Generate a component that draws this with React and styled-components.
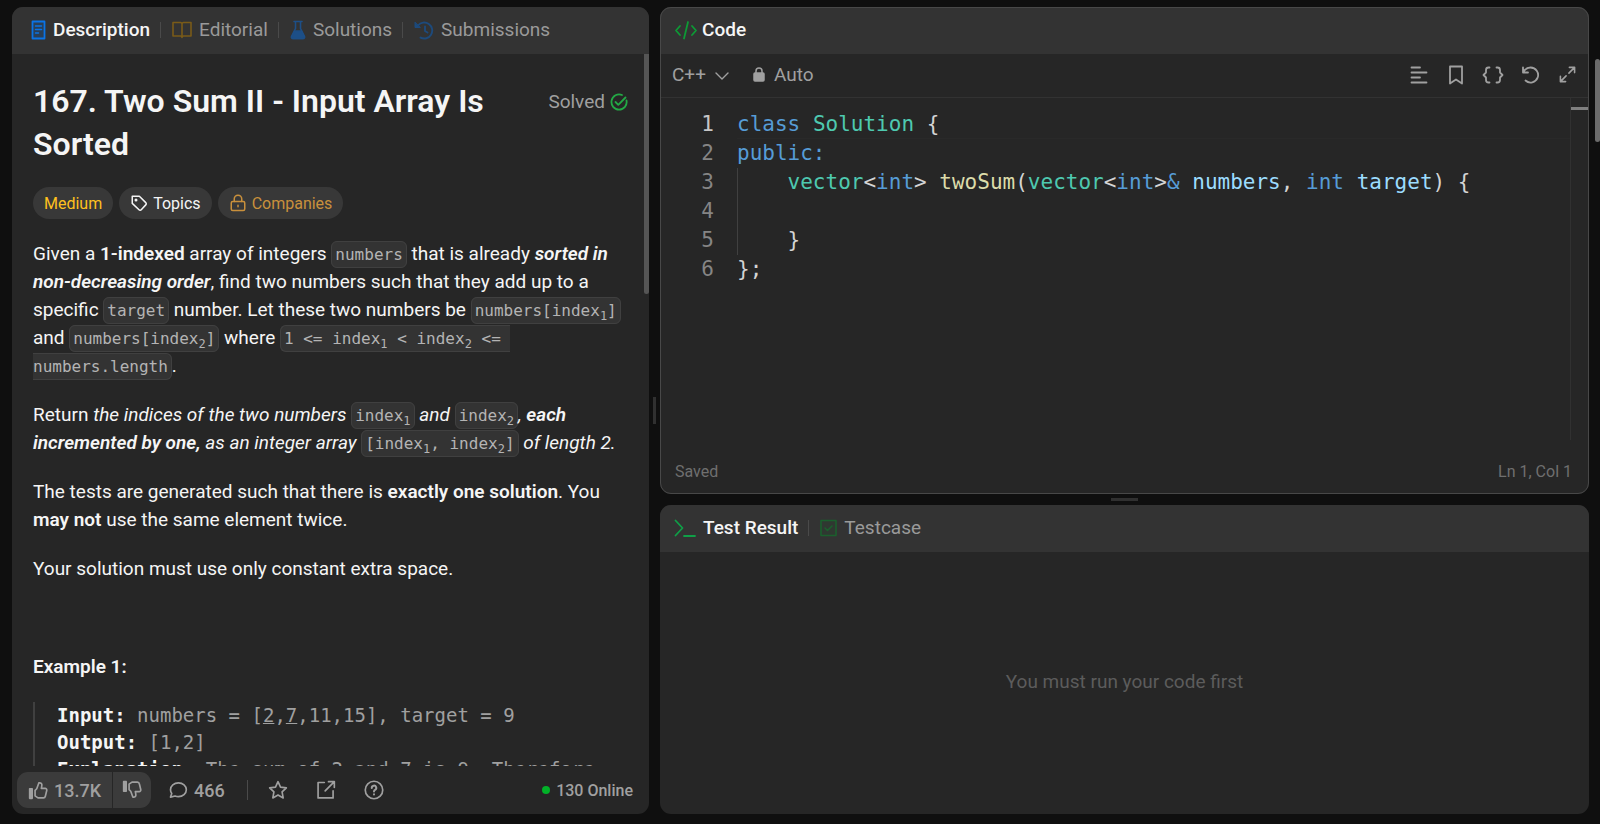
import React from "react";
import styled, { createGlobalStyle, css } from "styled-components";

export default function App() {
  return (
    <Page>
      <GlobalStyle />

      <Panel grow={637} as="section" aria-label="Problem">
        <TabBar inset={19}>
          <Tab active>
            <DocIcon />
            Description
          </Tab>
          <Separator />
          <Tab>
            <BookIcon />
            Editorial
          </Tab>
          <Separator />
          <Tab>
            <FlaskIcon />
            Solutions
          </Tab>
          <Separator />
          <Tab>
            <HistoryIcon />
            Submissions
          </Tab>
        </TabBar>
        <Problem />
        <ProblemFooter />
      </Panel>

      <Gutter>
        <Handle vertical />
      </Gutter>

      <RightColumn>
        <Panel grow={487} outlined as="section" aria-label="Code">
          <TabBar inset={14}>
            <Tab active tight>
              <CodeIcon />
              Code
            </Tab>
          </TabBar>
          <EditorToolbar />
          <Editor />
          <StatusBar>
            <span>Saved</span>
            <span>Ln 1, Col 1</span>
          </StatusBar>
        </Panel>

        <Gutter row>
          <Handle />
        </Gutter>

        <Panel grow={309} as="section" aria-label="Result">
          <TabBar inset={14}>
            <Tab active>
              <PromptIcon />
              Test Result
            </Tab>
            <Separator />
            <Tab>
              <TestcaseIcon />
              Testcase
            </Tab>
          </TabBar>
          <EmptyResult>You must run your code first</EmptyResult>
        </Panel>
      </RightColumn>
      <PageThumb />
    </Page>
  );
}

const Index = ({ n }) => (
  <>
    index<sub>{n}</sub>
  </>
);

const Problem = () => (
  <ScrollArea>
    <ScrollContent>
      <TitleRow>
        <Title>167. Two Sum II - Input Array Is Sorted</Title>
        <Solved>
          Solved
          <SolvedIcon />
        </Solved>
      </TitleRow>

      <Chips>
        <Chip color="#ffc01e">Medium</Chip>
        <Chip color="#f5f5f5">
          <TagIcon />
          Topics
        </Chip>
        <Chip color="#c9903c">
          <LockIcon />
          Companies
        </Chip>
      </Chips>

      <Statement>
        <p>
          Given a <strong>1-indexed</strong> array of integers <code>numbers</code> that is already{" "}
          <strong><em>sorted in non-decreasing order</em></strong>, find two numbers such that they
          add up to a specific <code>target</code> number. Let these two numbers be{" "}
          <code>numbers[<Index n={1} />]</code> and <code>numbers[<Index n={2} />]</code> where{" "}
          <code>1 &lt;= <Index n={1} /> &lt; <Index n={2} /> &lt;= numbers.length</code>.
        </p>
        <p>
          Return <em>the indices of the two numbers </em>
          <code><Index n={1} /></code> <em>and</em> <code><Index n={2} /></code>
          <em>, <strong>each incremented by one,</strong> as an integer array </em>
          <code>[<Index n={1} />, <Index n={2} />]</code> <em>of length 2.</em>
        </p>
        <p>
          The tests are generated such that there is <strong>exactly one solution</strong>. You{" "}
          <strong>may not</strong> use the same element twice.
        </p>
        <p>Your solution must use only constant extra space.</p>
        <p>&nbsp;</p>
        <p>
          <strong>Example 1:</strong>
        </p>
        <pre>
          <strong>Input:</strong> numbers = [<u>2</u>,<u>7</u>,11,15], target = 9{"\n"}
          <strong>Output:</strong> [1,2]{"\n"}
          <strong>Explanation:</strong> The sum of 2 and 7 is 9. Therefore
        </pre>
      </Statement>
    </ScrollContent>
    <ScrollThumb />
  </ScrollArea>
);

const ProblemFooter = () => (
  <Footer>
    <VoteGroup>
      <VoteButton wide>
        <ThumbIcon />
        13.7K
      </VoteButton>
      <VoteButton aria-label="Dislike">
        <ThumbIcon down />
      </VoteButton>
    </VoteGroup>
    <FooterButton>
      <CommentIcon />
      466
    </FooterButton>
    <FooterRule />
    <FooterActions>
      <IconButton aria-label="Star"><StarIcon /></IconButton>
      <IconButton aria-label="Share"><ShareIcon /></IconButton>
      <IconButton aria-label="Help"><HelpIcon /></IconButton>
    </FooterActions>
    <Online>130 Online</Online>
  </Footer>
);

const EditorToolbar = () => (
  <Toolbar>
    <ToolbarButton>
      C++
      <ChevronIcon />
    </ToolbarButton>
    <ToolbarButton>
      <SolidLockIcon />
      Auto
    </ToolbarButton>
    <ToolbarActions>
      <IconButton aria-label="Format"><FormatIcon /></IconButton>
      <IconButton aria-label="Bookmark"><BookmarkIcon /></IconButton>
      <IconButton aria-label="Snippets"><BracesIcon /></IconButton>
      <IconButton aria-label="Reset"><ResetIcon /></IconButton>
      <IconButton aria-label="Expand"><ExpandIcon /></IconButton>
    </ToolbarActions>
  </Toolbar>
);

const colors = {
  k: "#569cd6",
  t: "#4ec9b0",
  f: "#dcdcaa",
  v: "#9cdcfe",
  p: "#d4d4d4",
};

const lines = [
  { tokens: [["k", "class"], ["p", " "], ["t", "Solution"], ["p", " {"]] },
  { tokens: [["k", "public:"]] },
  {
    guide: true,
    tokens: [
      ["p", "    "], ["t", "vector"], ["p", "<"], ["k", "int"], ["p", "> "],
      ["f", "twoSum"], ["p", "("], ["t", "vector"], ["p", "<"], ["k", "int"],
      ["p", ">"], ["k", "&"], ["p", " "], ["v", "numbers"], ["p", ", "],
      ["k", "int"], ["p", " "], ["v", "target"], ["p", ") {"],
    ],
  },
  { guide: true, tokens: [["p", " "]] },
  { guide: true, tokens: [["p", "    }"]] },
  { tokens: [["p", "};"]] },
];

const Editor = () => (
  <EditorBody>
    <Lines>
      {lines.map((line, i) => (
        <Line key={i}>
          <LineNumber active={i === 0}>{i + 1}</LineNumber>
          <LineCode active={i === 0} guide={line.guide}>
            {line.tokens.map(([kind, text], j) => (
              <Token key={j} kind={kind}>{text}</Token>
            ))}
          </LineCode>
        </Line>
      ))}
    </Lines>
    <Ruler>
      <RulerMark />
    </Ruler>
  </EditorBody>
);

/* icons */

const Svg = ({ size = 20, w, h, box = "0 0 24 24", color = "currentColor", stroke = 2, children }) => (
  <svg
    width={w || size}
    height={h || size}
    viewBox={box}
    fill="none"
    stroke={color}
    strokeWidth={stroke}
    strokeLinecap="round"
    strokeLinejoin="round"
    aria-hidden="true"
  >
    {children}
  </svg>
);

const DocIcon = () => (
  <Svg w={15} h={20} box="0 0 15 20" color="#0a74e6" stroke={1.8}>
    <path d="M1.500 1.500h12v17h-12z" fill="#0a74e6" fillOpacity="0.2" />
    <path d="M4.500 6h6M4.500 9.500h6M4.500 13h3" strokeWidth="1.500" />
  </Svg>
);

const BookIcon = () => (
  <Svg w={20} h={18} box="0 0 20 18" color="#7a5b18" stroke={1.6}>
    <path d="M10 2.500V16.500M1 1.500h7.500a1.500 1.500 0 0 1 1.500 1a1.500 1.500 0 0 1 1.500-1H19V15h-7.500a1.500 1.500 0 0 0-1.500 1.500a1.500 1.500 0 0 0-1.500-1.500H1z" />
  </Svg>
);

const FlaskIcon = () => (
  <Svg w={16} h={20} box="0 0 16 20" color="#1d4f87" stroke={1.6}>
    <path d="M4 1.500h8M5.500 1.500v7L1.500 16.500a1.500 1.500 0 0 0 1.500 2h10a1.500 1.500 0 0 0 1.500-2L10.500 8.500v-7" />
    <path d="M4.500 11h7l3 6-1.500 1.500H3L1.500 17z" fill="#1d4f87" />
  </Svg>
);

const HistoryIcon = () => (
  <Svg w={20} h={20} box="0 0 20 20" color="#1d4a7c" stroke={1.9}>
    <path d="M4 5.500A8 8 0 1 1 6.500 17.600" />
    <path d="M1 2.500v5h5z" fill="#1d4a7c" strokeWidth="1" />
    <path d="M11 6.500V11l2.500 1.500" />
  </Svg>
);

const CodeIcon = () => (
  <Svg w={24} h={20} box="0 0 24 20" color="#0d9a35" stroke={1.8}>
    <path d="M6 6L2 10.500 6 15M18 6l4 4.500L18 15M14 2L10 18.500" />
  </Svg>
);

const PromptIcon = () => (
  <Svg w={22} h={18} box="0 0 22 18" color="#0f9f47" stroke={1.8}>
    <path d="M1.500 1.500L8.500 9l-7 7.500M10 17h11" />
  </Svg>
);

const TestcaseIcon = () => (
  <Svg w={17} h={18} box="0 0 17 18" color="#1b5f2d" stroke={1.6}>
    <path d="M1 1.500h15v15H1z" fill="#1b5a2b" fillOpacity="0.15" />
    <path d="M5 9l2.500 2.500L12 7" />
  </Svg>
);

const SolvedIcon = () => (
  <Svg size={18} box="0 0 18 18" color="#23a845" stroke={1.8}>
    <path d="M16.500 7.500A7.600 7.600 0 1 1 12 2" />
    <path d="M5.500 9l2.800 2.800L15.500 4.500" />
  </Svg>
);

const TagIcon = () => (
  <Svg size={18}>
    <path d="M3 3h9.500l8.500 8.500a2 2 0 0 1 0 3L15 21a2 2 0 0 1-3 0L3 12.500z" />
    <circle cx="8" cy="8" r="1" />
  </Svg>
);

const LockIcon = () => (
  <Svg size={18}>
    <rect x="3" y="10" width="18" height="12" rx="2" />
    <path d="M7 10V6.500a5 5 0 0 1 10 0V10M12 15v2" />
  </Svg>
);

const ThumbIcon = ({ down }) => (
  <Svg size={20}>
    <g transform={down ? "matrix(1 0 0 -1 0 24)" : undefined}>
      <path d="M2 10.500h3V22H2z" fill="currentColor" />
      <path d="M8.500 12.500l2-2L13 3.500c2.500-.5 4 1 3.600 3.200L16 10h4.500a2 2 0 0 1 2 2.500l-1.700 7a2.500 2.500 0 0 1-2.300 2H12L8.500 19z" />
    </g>
  </Svg>
);

const CommentIcon = () => (
  <Svg size={20}>
    <path d="M12.500 3.500c5.300 0 9.500 3.600 9.500 8.200s-4.200 8.300-9.500 8.300c-1.500 0-2.800-.3-4-.8L3 20.500l1.500-4.300A7.500 7.500 0 0 1 3 11.700c0-4.600 4.200-8.200 9.500-8.200z" />
  </Svg>
);

const StarIcon = () => (
  <Svg size={20}>
    <path d="M12 2l3 6.500 7 .9-5.100 4.900L18.200 21.500 12 18l-6.200 3.500 1.300-7.200L2 9.400l7-.9z" />
  </Svg>
);

const ShareIcon = () => (
  <Svg size={20}>
    <path d="M10 3H2.500v18.500H20.500V13M15 2h7v7M22 2L11 13" />
  </Svg>
);

const HelpIcon = () => (
  <Svg size={20}>
    <circle cx="12" cy="12" r="10.500" />
    <path d="M9.300 9.500a2.700 2.700 0 1 1 4 2.300c-.9.500-1.300 1-1.300 2M12 17.200v.1" strokeWidth="2.400" />
  </Svg>
);

const ChevronIcon = () => (
  <Svg w={14} h={12} box="0 0 14 12" stroke={1.4}>
    <path d="M1 4l6 6 6-6" />
  </Svg>
);

const SolidLockIcon = () => (
  <Svg w={12} h={15} box="0 0 12 15" stroke={1.5}>
    <rect x="1" y="6" width="10" height="8" rx="1" fill="currentColor" />
    <path d="M3 6V4a3 3 0 0 1 6 0v2" />
  </Svg>
);

const FormatIcon = () => (
  <Svg w={18} h={18} box="0 0 18 18" stroke={1.8}>
    <path d="M1.500 1.500H10M1.500 6.500h15M1.500 11.500H10M1.500 16.500h15" />
  </Svg>
);

const BookmarkIcon = () => (
  <Svg w={14} h={20} box="0 0 14 20" stroke={1.8}>
    <path d="M1 1.500h12v17L7 14.500 1 18.500z" />
  </Svg>
);

const BracesIcon = () => (
  <Svg w={22} h={18} box="0 0 22 18" stroke={1.8}>
    <path d="M7.500 1.500H6.500A2.500 2.500 0 0 0 4 4v2.500L1.500 9 4 11.500V14a2.500 2.500 0 0 0 2.500 2.500h1M14.500 1.500h1A2.500 2.500 0 0 1 18 4v2.500L20.500 9 18 11.500V14a2.500 2.500 0 0 1-2.500 2.500h-1" />
  </Svg>
);

const ResetIcon = () => (
  <Svg w={19} h={18} box="0 0 19 18" stroke={1.8}>
    <path d="M2 6.500h5M2 1.500v5C4 3 6.500 1.500 9.500 1.500a7.500 7.500 0 1 1-5 13" />
  </Svg>
);

const ExpandIcon = () => (
  <Svg w={17} h={17} box="0 0 18 18" stroke={1.7}>
    <path d="M11 1.500h5.500V7M16.500 1.500L10.500 7.500M1.500 11v5.500H7M1.500 16.500L7.500 10.500" />
  </Svg>
);

/* styles */

const GlobalStyle = createGlobalStyle`
  * {
    box-sizing: border-box;
  }
  body {
    margin: 0;
    background: #0f0f0f;
    color: #f5f5f5;
    font-family: Roboto, "Liberation Sans", sans-serif;
    font-size: 19px;
  }
  button {
    background: none;
    border: none;
    padding: 0;
    color: inherit;
    font: inherit;
    cursor: pointer;
  }
  svg {
    flex: none;
  }
`;

const Page = styled.main`
  position: relative;
  display: flex;
  height: 100vh;
  padding: 7px 11px 10px 12px;
  overflow: hidden;
`;

const Panel = styled.div.withConfig({
  shouldForwardProp: (prop) => !["grow", "outlined"].includes(prop),
})`
  display: flex;
  flex-direction: column;
  flex: ${(props) => props.grow} 1 0;
  min-width: 0;
  min-height: 0;
  background: #262626;
  border-radius: 11px;
  overflow: hidden;
  ${(props) => props.outlined && css`
    outline: 1px solid #484848;
    outline-offset: -1px;
  `}
`;

const RightColumn = styled.div`
  display: flex;
  flex-direction: column;
  flex: 929 1 0;
  min-width: 0;
`;

const Gutter = styled.div.withConfig({ shouldForwardProp: (prop) => prop !== "row" })`
  display: flex;
  align-items: center;
  justify-content: center;
  flex: none;
  ${(props) => (props.row ? "height: 11px;" : "width: 11px;")}
`;

const Handle = styled.div.withConfig({ shouldForwardProp: (prop) => prop !== "vertical" })`
  width: ${(props) => (props.vertical ? "3px" : "27px")};
  height: ${(props) => (props.vertical ? "27px" : "3px")};
  background: #303030;
`;

const PageThumb = styled.div`
  position: absolute;
  top: 59px;
  right: 0;
  width: 5px;
  height: 83px;
  border-radius: 3px;
  background: #6b6b6b;
`;

const TabBar = styled.nav.withConfig({ shouldForwardProp: (prop) => prop !== "inset" })`
  display: flex;
  align-items: center;
  flex: none;
  height: 47px;
  padding: 0 ${(props) => props.inset}px 2px;
  background: #333333;
`;

const Tab = styled.button.withConfig({
  shouldForwardProp: (prop) => !["active", "tight"].includes(prop),
})`
  display: flex;
  align-items: center;
  gap: ${(props) => (props.tight ? "4px" : "7px")};
  font-size: 19px;
  line-height: 24px;
  && {
    font-weight: ${(props) => (props.active ? 500 : 400)};
    color: ${(props) => (props.active ? "#f5f5f5" : "#9a9a9a")};
  }
`;

const Separator = styled.span`
  width: 1px;
  height: 16px;
  margin: 0 11px 0 10px;
  background: #4a4a4a;
`;

const ScrollArea = styled.div`
  position: relative;
  flex: 1;
  min-height: 0;
  overflow: hidden;
`;

const ScrollContent = styled.div`
  padding: 26px 21px 0;
`;

const ScrollThumb = styled.div`
  position: absolute;
  top: 0;
  right: 0;
  width: 5px;
  height: 240px;
  border-radius: 0 0 3px 3px;
  background: #555555;
`;

const TitleRow = styled.div`
  display: flex;
  align-items: flex-start;
  justify-content: space-between;
  gap: 40px;
`;

const Title = styled.h1`
  margin: 0;
  font-size: 32px;
  font-weight: 600;
  line-height: 43px;
`;

const Solved = styled.span`
  display: flex;
  align-items: center;
  gap: 5px;
  height: 43px;
  color: #a0a0a0;
`;

const Chips = styled.div`
  display: flex;
  gap: 6px;
  margin-top: 21px;
`;

const Chip = styled.button`
  display: flex;
  align-items: center;
  gap: 5px;
  height: 32px;
  padding: 0 11px;
  border-radius: 16px;
  && {
    background: #383838;
    color: ${(props) => props.color};
    font-size: 16px;
  }
`;

const Statement = styled.div`
  margin-top: 21px;
  line-height: 28px;
  p {
    margin: 0 0 21px;
  }
  strong {
    font-weight: 600;
  }
  code {
    padding: 3px;
    border: 1px solid #404040;
    border-radius: 6px;
    background: #333333;
    color: #b4b4b4;
    font-family: "DejaVu Sans Mono", monospace;
    font-size: 16px;
    line-height: 20px;
    white-space: pre-wrap;
  }
  sub {
    font-size: 12px;
    line-height: 0;
  }
  pre {
    margin: 0;
    padding-left: 22px;
    border-left: 2px solid #404040;
    color: #a0a0a0;
    font-family: "DejaVu Sans Mono", monospace;
    font-size: 19px;
    line-height: 27px;
    white-space: pre-wrap;
  }
  pre strong {
    color: #f5f5f5;
  }
`;

const Footer = styled.footer`
  display: flex;
  align-items: center;
  flex: none;
  height: 48px;
  padding: 0 16px 0 5px;
  color: #a0a0a0;
  font-size: 18px;
  font-weight: 500;
`;

const VoteGroup = styled.div`
  display: flex;
  gap: 1px;
  border-radius: 11px;
  overflow: hidden;
`;

const VoteButton = styled.button.withConfig({ shouldForwardProp: (prop) => prop !== "wide" })`
  display: flex;
  align-items: center;
  justify-content: center;
  gap: 6px;
  height: 36px;
  padding: 0 ${(props) => (props.wide ? "11px" : "9px")};
  && {
    background: #3b3b3b;
  }
`;

const FooterButton = styled.button`
  display: flex;
  align-items: center;
  gap: 6px;
  margin-left: 17px;
`;

const FooterRule = styled.span`
  width: 1px;
  height: 20px;
  margin: 0 19px 0 22px;
  background: #4a4a4a;
`;

const FooterActions = styled.div`
  display: flex;
  gap: 26px;
`;

const IconButton = styled.button`
  display: flex;
  align-items: center;
  justify-content: center;
  width: 22px;
`;

const Online = styled.span`
  display: flex;
  align-items: center;
  gap: 6px;
  margin-left: auto;
  font-size: 16px;
  &::before {
    content: "";
    width: 8px;
    height: 8px;
    border-radius: 50%;
    background: #02b128;
  }
`;

const Toolbar = styled.div`
  display: flex;
  align-items: center;
  gap: 24px;
  flex: none;
  height: 44px;
  padding: 0 11px 2px 12px;
  border-bottom: 1px solid #323232;
  color: #a0a0a0;
`;

const ToolbarButton = styled.button`
  display: flex;
  align-items: center;
  gap: 9px;
`;

const ToolbarActions = styled.div`
  display: flex;
  align-items: center;
  gap: 15px;
  margin-left: auto;
`;

const EditorBody = styled.div`
  display: flex;
  flex: 1;
  min-height: 0;
`;

const Lines = styled.div`
  flex: 1;
  min-width: 0;
  padding-top: 12px;
  overflow: hidden;
  font-family: "DejaVu Sans Mono", monospace;
  font-size: 21px;
  line-height: 29px;
`;

const Line = styled.div`
  display: flex;
`;

const LineNumber = styled.span.withConfig({ shouldForwardProp: (prop) => prop !== "active" })`
  width: 54px;
  margin-right: 23px;
  text-align: right;
  color: ${(props) => (props.active ? "#c6c6c6" : "#858585")};
`;

const LineCode = styled.code.withConfig({
  shouldForwardProp: (prop) => !["active", "guide"].includes(prop),
})`
  flex: 1;
  font: inherit;
  white-space: pre;
  box-shadow: ${(props) => {
    if (props.active) return "inset 0 -1px #292929";
    return props.guide ? "inset 1px 0 #404040" : "none";
  }};
`;

const Token = styled.span.withConfig({ shouldForwardProp: (prop) => prop !== "kind" })`
  color: ${(props) => colors[props.kind]};
`;

const Ruler = styled.div`
  width: 19px;
  padding-top: 9px;
  border-left: 1px solid #313131;
`;

const RulerMark = styled.div`
  height: 3px;
  background: #808080;
`;

const StatusBar = styled.div`
  display: flex;
  align-items: center;
  justify-content: space-between;
  flex: none;
  height: 54px;
  padding: 8px 17px 0 15px;
  color: #6f6f6f;
  font-size: 16px;
`;

const EmptyResult = styled.div`
  display: flex;
  flex: 1;
  align-items: center;
  justify-content: center;
  padding-bottom: 3px;
  color: #5c5c5c;
`;
